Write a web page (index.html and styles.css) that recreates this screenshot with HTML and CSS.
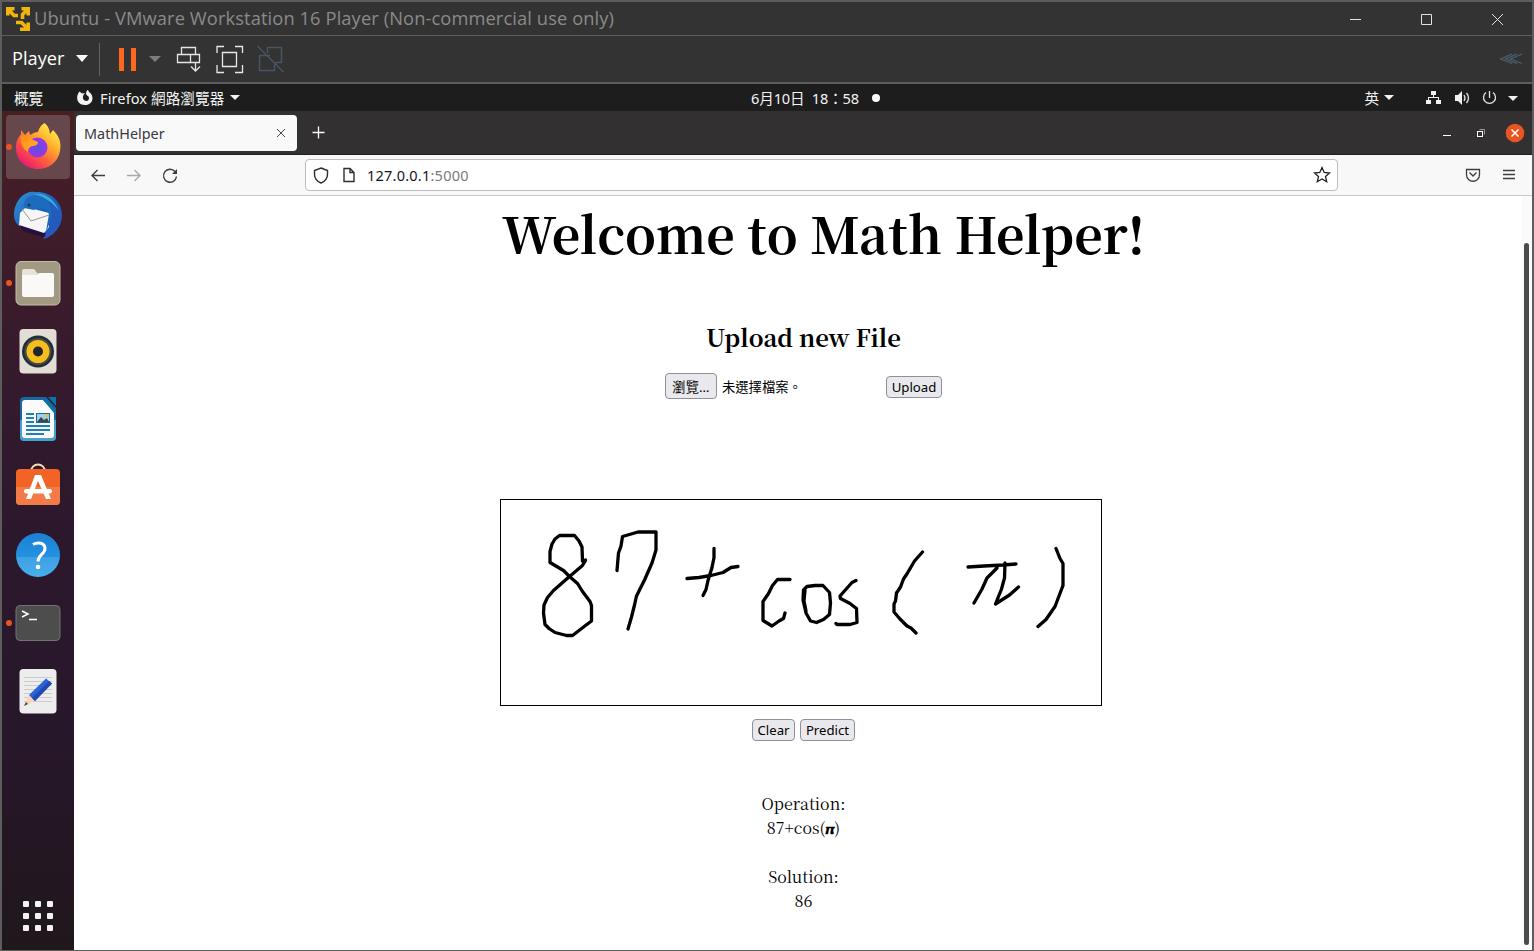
FILE: index.html
```html
<!DOCTYPE html>
<html lang="zh-Hant">
<head>
<meta charset="utf-8">
<title>MathHelper</title>
<link rel="stylesheet" href="styles.css">
</head>
<body>
<div class="window">
  <header class="titlebar">
    <svg class="vm-logo" width="26" height="26" viewBox="5 5 26 26" fill="none" stroke="#f1b50d" stroke-width="3.600"><path d="M7.800 14.500V7.800h6.700M8 8l6 6.500h4M28.200 14.500V7.800h-6.700M28 8l-5.500 5.500v4.500M20 28.200h8.200V21.500M28 28l-6.500-6.500H16"/></svg>
    <span class="vm-title">Ubuntu - VMware Workstation 16 Player (Non-commercial use only)</span>
    <svg class="vm-controls" width="160" height="16" viewBox="1348 10 160 16" fill="none" stroke="#e2e2e2"><path d="M1350 18.500h11M1421.500 13.500h10v10h-10zM1492 13l11 11M1503 13l-11 11"/></svg>
  </header>
  <div class="toolbar">
    <span class="player">Player</span>
    <svg class="tool-icons" width="220" height="46" viewBox="70 36 220 46" fill="none">
      <path d="M76 55h12l-6 7z" fill="#fff"/><path d="M99.500 43v33" stroke="#626262"/>
      <path d="M119 48h5v23h-5zM131 48h5v23h-5z" fill="#ff671d"/><path d="M149 56h12l-6 6z" fill="#7d7d7d"/>
      <path d="M181.500 54.500v-7h14v7M190.500 62.500h-13v-8h22v8h-9v-8M195.500 62v9M191 66.500l4.500 4.500 4.500-4.500" stroke="#e5e5e5" stroke-width="1.300"/>
      <path d="M217 53v-6.500h7M235 46.500h7.500V53M242.500 65v7.500H235M224 72.500h-7V65M222.500 52.500h14v14h-14z" stroke="#e8e8e8" stroke-width="1.300"/>
      <path d="M267.500 53v-5.500h14v15h-6M270 55.500h-10.500v15h15v-6M257.500 46l26 26" stroke="#465563" stroke-width="1.500"/>
    </svg>
    <svg class="collapse" width="24" height="14" viewBox="1499 52 24 14" fill="none" stroke="#4b6070" stroke-width="1.300"><path d="M1512 54l-11.500 5 11.500 4.500M1517 54l-11.500 5 11.500 4.500M1522 54l-11.500 5 11.500 4.500"/></svg>
  </div>
  <div class="topbar">
    <span class="activities">概覽</span>
    <svg class="fox-mini" width="16" height="18" viewBox="77 88 16 18"><path d="M79.500 90.500l2.500 2 3-.5c-2 2-3 5-1 7 2 2 5 1 5-2 0-2-2-2-3-4 0-2 1-4 2-4l1 2c6 4 4 13-4 13-8 0-10-8-5.500-13.500z" fill="#f3f3f3"/></svg>
    <span class="app-name">Firefox 網路瀏覽器</span>
    <i class="caret"></i>
    <span class="clock">6月10日&nbsp; 18：58</span>
    <i class="dot"></i>
    <span class="ime">英</span><i class="caret ime-caret"></i>
    <svg width="100" height="20" viewBox="1422 87 100 20" fill="#f1f1f1"><path d="M1431 90h5v4h-5zM1426 99h5v4h-5zM1436 99h5v4h-5zM1433 94h1v2h5v3h-1v-2h-9v2h-1v-3h5zM1455 94h3l4-4v14l-4-4h-3z"/><path d="M1464 94q2 3 0 6M1466.500 92q4 5 0 10M1489.500 90v7M1486 91.500a6 6 0 1 0 7 0" fill="none" stroke="#e5e5e5" stroke-width="1.300"/><path d="M1508 95h10l-5 5z"/></svg>
  </div>
  <div class="desktop">
    <aside class="dock">
      <svg viewBox="2 113 72 68">
        <defs>
          <linearGradient id="fx" x1="1" y1="0" x2=".2" y2="1"><stop offset=".1" stop-color="#fff34a"/><stop offset=".4" stop-color="#ffb02d"/><stop offset=".68" stop-color="#ff5b3c"/><stop offset="1" stop-color="#e3127b"/></linearGradient>
          <linearGradient id="fo" x1="0" y1="0" x2="1" y2="1"><stop stop-color="#ff8a16"/><stop offset="1" stop-color="#ffb52e"/></linearGradient>
          <radialGradient id="fp"><stop stop-color="#5b50e0"/><stop offset="1" stop-color="#9b35e4"/></radialGradient>
          <linearGradient id="bl" x1="0" y1="0" x2="0" y2="1"><stop stop-color="#1b80d4"/><stop offset=".54" stop-color="#2491df"/><stop offset=".55" stop-color="#3da0e5"/><stop offset="1" stop-color="#48aeec"/></linearGradient>
          <linearGradient id="tb" x1="0" y1="0" x2="1" y2="1"><stop stop-color="#2d96dd"/><stop offset=".5" stop-color="#1d5fb8"/><stop offset="1" stop-color="#2756c5"/></linearGradient>
        </defs>
        <rect x="6" y="115" width="64" height="64" rx="4" fill="#65474c"/><circle cx="9" cy="147" r="3" fill="#e95420"/>
        <path d="M44.500 123c4 3 5 7 5.500 11l3-4c5 5 9 11 7 21-2 11-11 18-22 18-13 0-22-9-22-21 0-7 2-10 5-14v-4l4 5 4-4 1 4c3-2 6-3 8-3 1-4 3-7 6.500-9z" fill="url(#fx)"/>
        <circle cx="37.500" cy="147.500" r="10" fill="url(#fp)"/>
        <path d="M21 136c4-1 8 0 10 3l7 3c0 3-3 4-6 4-3 1-4 3-4 6-5-3-8-9-7-16z" fill="url(#fo)"/>
      </svg>
      <svg viewBox="2 181 72 68">
        <path d="M21 197c4-4 9-6 14-5 15-1 27 9 27 23 0 8-4 15-9 19l-6 4-4 1 3-4-27-9c-4-4-5-7-5-12 0-6 3-13 7-17z" fill="url(#tb)"/>
        <path d="M19 223l27 10-3 4-18-5c-3-2-5-5-6-9z" fill="#251044"/>
        <path d="M20 213l6-6 23 6v14l-5 6-25-8z" fill="#f6f6f6"/><path d="M22 209l9 12 18-6" fill="none" stroke="#999"/>
        <path d="M24 208c-2-9 7-15 16-12 13 4 15 20 6 35l3-17c-4-7-10-7-15-4z" fill="#1c6bbd"/><path d="M33 194c13-2 22 6 26 17-5-7-14-15-26-17z" fill="#39a8db"/><circle cx="29" cy="205" r="1.500" fill="#23384f"/>
      </svg>
      <svg viewBox="2 249 72 68"><circle cx="9" cy="283" r="3" fill="#e95420"/><rect x="16" y="261.500" width="44" height="43.500" rx="5" fill="#a29983" stroke="#c4bda6"/><path d="M22 278v-7q0-2 2-2h10l4 5v5z" fill="#e7e3da"/><path d="M22 275h15l2-2h13q2 0 2 2v20q0 2-2 2H24q-2 0-2-2z" fill="#faf9f7"/></svg>
      <svg viewBox="2 317 72 68"><rect x="19.500" y="329" width="37" height="44.500" rx="4" fill="#e2ded5"/><circle cx="38" cy="351.500" r="16" fill="#202d3d"/><circle cx="38" cy="351.500" r="13.500" fill="#4b4a3e"/><circle cx="38" cy="351.500" r="11.500" fill="#f5bd1e"/><circle cx="38" cy="351.500" r="5" fill="#222628"/></svg>
      <svg viewBox="2 385 72 68"><path d="M24 397h22l10 11v29q0 4-4 4H24q-4 0-4-4v-36q0-4 4-4z" fill="#16699f"/><path d="M20 420h36v17q0 4-4 4H24q-4 0-4-4z" fill="#47a1cd"/><path d="M25 400h18l11 11v24q0 3-3 3H25q-3 0-3-3v-32q0-3 3-3z" fill="#fafafa"/><path d="M48 397h8v9zM43 400h3l9 10-1 3z" fill="#0b75aa"/><path d="M26 414h8M26 418h8M26 422h8M26 426h24M26 430h24M26 434h18" stroke="#1d81b8" stroke-width="2"/><path d="M36 413h14v10H36z" fill="#15699b"/><path d="M37 414h12v8H37z" fill="#9bd2e9"/><path d="M37 422l4-5 3 3 3-2 2 4z" fill="#444"/><circle cx="47" cy="415.500" r="1.500" fill="#f8c018"/></svg>
      <svg viewBox="2 453 72 68"><path d="M31 472c0-10 14-10 14 0" fill="none" stroke="#f6ddb1" stroke-width="2"/><rect x="16" y="469" width="44" height="36" rx="4" fill="#f26327"/><path d="M16 487h44v14q0 4-4 4H20q-4 0-4-4z" fill="#f37b48"/><path d="M35 475h6l10 24h-5l-8-18-7 18h-5z" fill="#fff"/><rect x="24" y="489" width="28" height="4.500" rx="2" fill="#fff"/></svg>
      <svg viewBox="2 521 72 68"><circle cx="38" cy="555" r="22" fill="url(#bl)"/><path d="M33 544.500c5-3 12-1.500 12 4 0 6-7 6-7 13" fill="none" stroke="#fff" stroke-width="3"/><circle cx="38" cy="567" r="2.300" fill="#fff"/></svg>
      <svg viewBox="2 589 72 68"><circle cx="9" cy="623" r="3" fill="#e95420"/><rect x="16" y="605.500" width="44" height="35" rx="4" fill="#4d4d4d" stroke="#737373"/><path d="M22 611l6 3-6 3M29 619.500h8" fill="none" stroke="#fff" stroke-width="1.500"/></svg>
      <svg viewBox="2 657 72 68"><rect x="19.500" y="669" width="37" height="44.500" rx="4" fill="#ededed"/><path d="M24 677.500h28M24 681.500h28M24 685.500h28M24 689.500h28M24 693.500h28M24 697.500h28M24 701.500h28" stroke="#ccc"/><path d="M24 706l5-11 6 6z" fill="#fbd5b0"/><path d="M24 706l2-4 2 2z" fill="#444"/><path d="M29 695l17-16.500 6 5L35 701z" fill="#2c63db"/><path d="M32 698l17-17 3 2.500L35 701z" fill="#1f49b4"/></svg>
      <svg class="apps" viewBox="2 882 72 68" fill="#f2f2f2"><rect x="23" y="901" width="6" height="6" rx="1"/><rect x="35" y="901" width="6" height="6" rx="1"/><rect x="47" y="901" width="6" height="6" rx="1"/><rect x="23" y="913" width="6" height="6" rx="1"/><rect x="35" y="913" width="6" height="6" rx="1"/><rect x="47" y="913" width="6" height="6" rx="1"/><rect x="23" y="925" width="6" height="6" rx="1"/><rect x="35" y="925" width="6" height="6" rx="1"/><rect x="47" y="925" width="6" height="6" rx="1"/></svg>
    </aside>
    <section class="browser">
      <div class="tabs">
        <div class="tab"><span>MathHelper</span><svg width="10" height="10" viewBox="0 0 10 10" stroke="#444" fill="none"><path d="M1 1l8 8M9 1l-8 8"/></svg></div>
        <svg class="plus" width="13" height="13" viewBox="0 0 13 13" stroke="#fff" stroke-width="1.300"><path d="M6.500 0.500v12M.5 6.500h12"/></svg>
        <svg class="controls" width="84" height="20" viewBox="1441 123 84 20" fill="none"><path d="M1443 135.500h8" stroke="#fff"/><path d="M1479.500 129.500h5v5" stroke="#999"/><rect x="1477.500" y="131.500" width="5" height="5" stroke="#fff"/><circle cx="1515" cy="133" r="9.300" fill="#e95420"/><path d="M1511.500 129.500l7 7M1518.500 129.500l-7 7" stroke="#fff" stroke-width="1.500"/></svg>
      </div>
      <div class="nav">
        <svg class="nav-icons" width="92" height="20" viewBox="88 165 92 20" fill="none" stroke="#3d3d43" stroke-width="1.400"><path d="M105 175.500H92M97.500 170l-5.500 5.500 5.500 5.500"/><path d="M127 175.500h13M134.500 170l5.500 5.500-5.500 5.500" stroke="#aaa"/><path d="M175 171.500a6.500 6.500 0 1 0 1.500 5"/><path d="M177 169v5h-5z" fill="#3d3d43" stroke="none"/></svg>
        <div class="address">
          <svg width="46" height="20" viewBox="311 165 46 20" fill="none" stroke="#2d2d33" stroke-width="1.400"><path d="M321 168l6.500 2.500v4c0 4-3 7-6.500 8.500-3.500-1.500-6.500-4.500-6.500-8.500v-4z"/><path d="M344 168.500h6l4 4v9h-10zM350 168.500v4h4"/></svg>
          <span class="url">127.0.0.1<em>:5000</em></span>
          <svg class="star" width="18" height="18" viewBox="1313 166 18 18" fill="none" stroke="#222" stroke-width="1.300"><path d="M1322 167.500l2.200 4.900 5.300.6-4 3.500 1.200 5.200-4.700-2.700-4.700 2.700 1.200-5.200-4-3.500 5.300-.6z"/></svg>
        </div>
        <svg class="nav-right" width="52" height="16" viewBox="1465 167 52 16" fill="none" stroke="#3d3d43" stroke-width="1.300"><path d="M1466.500 169.500h13v5c0 9-13 9-13 0zM1469.500 172.500l3.500 3.500 3.500-3.500M1503 170.500h12M1503 174.500h12M1503 178.500h12"/></svg>
      </div>
      <main class="page">
        <div class="content">
          <h1>Welcome to Math Helper!</h1>
          <h2>Upload new File</h2>
          <div class="upload"><button class="browse">瀏覽…</button><span class="nofile">未選擇檔案。</span><button class="send">Upload</button></div>
          <svg class="canvas" width="602" height="207" viewBox="500 499 602 207" fill="none" stroke="#000" stroke-width="3.300" stroke-linecap="round" stroke-linejoin="round"><rect x="500.500" y="499.500" width="601" height="206" stroke-width="1" stroke-linejoin="miter"/>
            <path d="M585.500 560l-3 1-.5-14-3-6-4.500-5.500h-15l-4.500 3.500-3 5-2 7.500v11l13.500 8 6 6 8 7 5 8 7.500 10 1.500 4v15.500l-6 4.500-13 10h-6l-11.500-3-6-4-4-4-1.500-11.500.5-8 3.500-7.500 6-7 16-14 13-11 3-5"/>
            <path d="M617 570.500l1.500-17.500 2.500-7 1.500-9.500 15.500-4.500h18v18l-4 13-7.500 17-8 16-2 9-3 12-3.500 12M714 548.500v9l-2 10-4 13-2 9-3 6M687 578.500l12-1 12-2 12-3 8-5 7-1"/>
            <path d="M790 579.500h-12.500l-5 6-4 8-5.500 8v19l9 5.500 7-5 4.500-2.500 1.500-5.500M815 585.500l-8 1-3.500 3.500-.5 10 3 13 4.500 8 6 1.500 7-3 6-5 1-11.500-1-10.500-6.500-7h-9M805 590l-1 11 2 10M856 580.500l-4 2-12 13.500.5 2.500 9.500 5 6.500 5 .5 14-7 2-13 0-1-1"/>
            <path d="M922.500 552l-8 9-7 12-4 6-3 8-4 6-1 8-1.500 3v8l6 7 7 7 4 2 5 5M968 567l16-1 19-1 13-1M997 568l-10 10-5 11-8 14M1005 563l-.5 15-3 11-6 15 14-9 9-8M1056 548.500l4 10 3 5v22l-8 21-9 13-8 7"/>
          </svg>
          <div class="actions"><button>Clear</button><button>Predict</button></div>
          <div class="result">Operation:<br>87+cos(<b>𝝅</b>)<br><br>Solution:<br>86</div>
        </div>
        <div class="scroll"><i class="thumb"></i></div>
      </main>
    </section>
  </div>
</div>
</body>
</html>
```
FILE: styles.css
```css
*{box-sizing:border-box}
body{margin:0;background:#5d5d5d;font-family:"Noto Sans","Noto Sans CJK TC",sans-serif}
svg{display:block;flex:none}
.window{width:1534px;height:951px;padding:2px 2px 1px;display:flex;flex-direction:column;overflow:hidden}
.titlebar{height:33px;background:#333;display:flex;align-items:center;padding:0 24px 0 3px;color:#8a8a8a}
.vm-logo{margin-right:3px}
.vm-title{font-family:"Open Sans",sans-serif;font-size:18.3px;line-height:30px;white-space:nowrap;letter-spacing:.105px;padding-bottom:2px}
.vm-controls{margin-left:auto}
.toolbar{height:46px;margin-top:1px;background:#333;display:flex;align-items:center;padding:0 9px 0 10px;color:#fff}
.player{width:58px;font:18.200px/44px "Open Sans",sans-serif;padding-bottom:2px}
.collapse{margin-left:auto}
.topbar{height:27px;margin-top:2px;background:#1d1d1d;display:flex;align-items:center;color:#f3f3f3;font-size:14.600px;line-height:27px;padding:0 10px 0 12px;white-space:nowrap}
.topbar span{padding-top:2px}
.activities{width:63px}
.fox-mini{margin-right:7px}
.app-name{width:126px;letter-spacing:.08px}
.caret{width:0;height:0;border:5px solid transparent;border-top-color:#f3f3f3;border-bottom:0;margin-left:4px}
.clock{margin-left:511px;width:108px;letter-spacing:-.15px}
.dot{width:8px;height:8px;border-radius:50%;background:#fff;margin-left:13px}
.ime{margin-left:auto;margin-right:1px}
.ime-caret{margin-right:28px}
.desktop{height:839px;display:flex}
.dock{width:72px;padding-top:2px;background:linear-gradient(#48201f 0,#421d29 80px,#371b2c 230px,#2c182d 420px,#27172a 630px,#20171c);display:flex;flex-direction:column}
.dock svg{width:72px;height:68px}
.dock .apps{margin-top:auto}
.browser{width:1458px}
.tabs{height:44px;background:#323030;border-bottom:1px solid #211e20;display:flex;align-items:center;padding:0 7px 0 2px}
.tab{width:221px;height:36px;background:#f9f9fa;border-radius:4px;display:flex;align-items:center;justify-content:space-between;padding:0 11px 0 8px;color:#38383d;font-size:14.400px}
.tab span{padding-top:2px}
.plus{margin-left:15px}
.controls{margin-left:auto}
.nav{height:41px;background:#f8f8f9;border-bottom:1px solid #c9c9cb;display:flex;align-items:center;padding:0 15px 0 14px}
.address{margin-left:125px;width:1033px;height:32px;border:1px solid #bdbdbf;border-radius:4px;background:#fff;display:flex;align-items:center;padding:0 6px 0 5px}
.url{margin-left:10px;font-size:14.500px;letter-spacing:.23px;color:#15141a}
.url em{font-style:normal;color:#7a797e}
.star{margin-left:auto}
.nav-right{margin-left:auto}
.page{height:754px;background:#fff;display:flex;justify-content:space-between}
.content{width:1448px;padding-left:426px;font-family:"Noto Serif CJK TC","Noto Serif CJK SC","Source Serif Pro","Liberation Serif",serif;color:#000}
.content h1{margin:0;padding-left:2px;height:104px;font-size:49.800px;line-height:73px;font-weight:700;white-space:nowrap}
.content h2{width:607px;margin:18px 0 0;font-size:23.800px;line-height:39px;font-weight:700;text-align:center}
.upload{display:flex;align-items:center;height:28px;margin:15px 0 99px;padding-left:165px}
button{font:13.200px/18px "Noto Sans","Noto Sans CJK TC",sans-serif;height:22px;padding:0;border:1px solid #8f8f9d;border-radius:4px;background:#e9e9ed;color:#000;white-space:nowrap}
.browse{width:52px;height:26px;padding-top:2px;letter-spacing:.2px}
.nofile{width:169px;padding:2px 0 0 5px;font:13.300px/20px "Noto Sans CJK TC",sans-serif}
.send{width:56px;margin-top:2px}
.actions{margin:13px 0 51px;padding-left:252px;display:flex;gap:5px}
.actions button:first-child{width:43px}
.actions button:last-child{width:55px}
.result{width:607px;text-align:center;font-size:16px;line-height:24.300px}
.result b{font:700 13.500px "DejaVu Serif","Liberation Serif",serif}
.scroll{width:10px;background:#fafafa;padding-top:47px}
.thumb{display:block;width:5px;height:702px;margin-left:2px;border-radius:3px;background:#4b4b4b}
```
